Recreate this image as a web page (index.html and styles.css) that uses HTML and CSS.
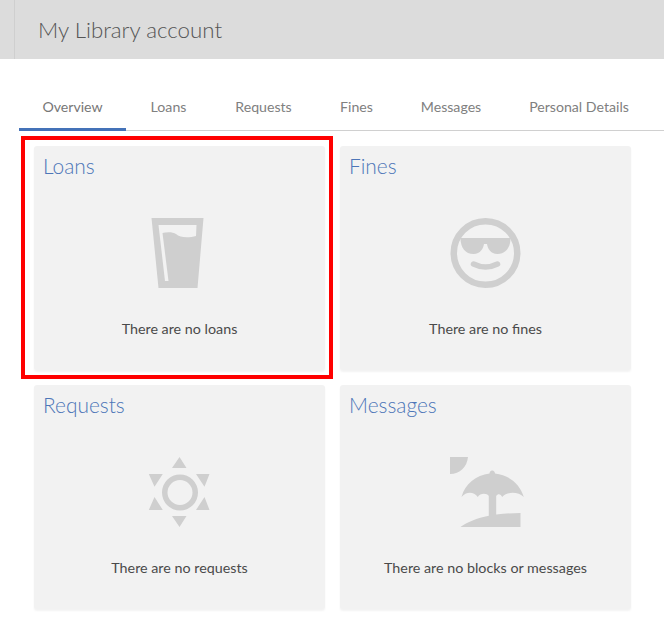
FILE: index.html
```html
<!DOCTYPE html>
<html lang="en">
<head>
<meta charset="utf-8">
<title>My Library account</title>
<link rel="stylesheet" href="styles.css">
</head>
<body>
<header class="header"><h1 class="title">My Library account</h1></header>
<nav class="tabs">
  <a class="tab active">Overview</a>
  <a class="tab">Loans</a>
  <a class="tab">Requests</a>
  <a class="tab">Fines</a>
  <a class="tab">Messages</a>
  <a class="tab">Personal Details</a>
</nav>
<main class="grid">
  <section class="card">
    <div class="highlight"></div>
    <h2 class="card-title">Loans</h2>
    <svg class="icon" viewBox="0 0 70 70"><path fill-rule="evenodd" d="M6.500 0H58.500L52.500 70H13.500ZM13.500 7 20 63H23.500L17.500 15C22 14 28 14 31 16C35 20 44 20 51 18L51.500 7Z"/></svg>
    <p class="msg">There are no loans</p>
  </section>
  <section class="card">
    <h2 class="card-title">Fines</h2>
    <svg class="icon" viewBox="0 0 70 70"><circle class="line" cx="34.500" cy="35" r="31.750" stroke-width="6.500"/><path d="M9.500 20H59.500C59.500 30 54.500 36 46.500 36C39.500 36 36.500 30 36 26H33C32.500 30 29.500 36 22.500 36C14.500 36 9.500 30 9.500 20Z"/><path class="line round" d="M22.500 46Q34.500 52 46.500 46" stroke-width="5.500"/></svg>
    <p class="msg">There are no fines</p>
  </section>
  <section class="card">
    <h2 class="card-title">Requests</h2>
    <svg class="icon" viewBox="0 0 70 70"><path fill-rule="evenodd" d="M34.500 0 41.500 11H27ZM34.500 70 27 59H41.500ZM3.800 17H17.800L9.500 29.700ZM51 17H64.500L59.500 29.700ZM9.500 40 17.800 53H3.800ZM59.500 40 64.500 53H51ZM35 17.500a18 18 0 1 0 0 36a18 18 0 1 0 0-36ZM35 23a12.500 12.500 0 1 1 0 25a12.500 12.500 0 1 1 0-25Z"/></svg>
    <p class="msg">There are no requests</p>
  </section>
  <section class="card">
    <h2 class="card-title">Messages</h2>
    <svg class="icon" viewBox="0 0 70 70"><path d="M-1 0H17C16 10 9 17-1 17ZM41.200 13.500C43 13.500 44 15 44 16.500C58 18 69 27 72.800 40C68 35 56 34 51.200 40C50 37 47 36 45.200 39V57.600C53 56.800 61 56 69.500 56V70H9.500C16 65 26 61 37.800 58.700V39C36 36 29 36 26.800 40C22 34 15 35 10.500 40C14 27 25 18 38.500 16.500C38.500 15 39.500 13.500 41.200 13.500Z"/></svg>
    <p class="msg">There are no blocks or messages</p>
  </section>
</main>
</body>
</html>
```
FILE: styles.css
```css
* { box-sizing: border-box; }
html, body { margin: 0; padding: 0; }
body { background: #fff; font-family: "Lato", "Open Sans", sans-serif; width: 664px; height: 639px; overflow: hidden; }
.header { height: 59px; background: #dcdcdc; padding-left: 14px; }
.title { margin: 0; height: 59px; border-left: 1px solid #cfcfcf; padding-left: 23px; font-size: 22.300px; line-height: 59px; font-weight: 300; color: #555; }
.tabs { display: grid; grid-template-columns: 107px 85px 105px 81px 108px 148px; margin: 36px 0 15px 19px; height: 36px; border-bottom: 1px solid #d0d0d0; }
.tab { height: 36px; font-size: 14.150px; line-height: 23px; text-align: center; color: #808080; white-space: nowrap; }
.tab.active { border-bottom: 3px solid #4472b8; color: #777; }
.grid { display: grid; grid-template-columns: 291px 291px; grid-auto-rows: 224px; gap: 15px; margin-left: 34px; }
.card { position: relative; background: #f2f2f2; border-radius: 3px; box-shadow: 0 2px 2px rgba(0,0,0,.05); padding-top: 7px; display: flex; flex-direction: column; align-items: center; }
.highlight { position: absolute; left: -13px; top: -10px; width: 312px; height: 243px; border: 4px solid #f00; }
.card-title { align-self: flex-start; margin: 0 0 0 9px; font-size: 20.900px; line-height: 26px; font-weight: 300; color: #4d76b8; height: 26px; }
.icon { width: 70px; height: 70px; margin-top: 39px; fill: #cfcfcf; overflow: visible; }
.line { fill: none; stroke: #cfcfcf; }
.round { stroke-linecap: round; }
.msg { margin: 31px 0 0; font-size: 14.300px; line-height: 20px; color: #4a4a4a; }
```
